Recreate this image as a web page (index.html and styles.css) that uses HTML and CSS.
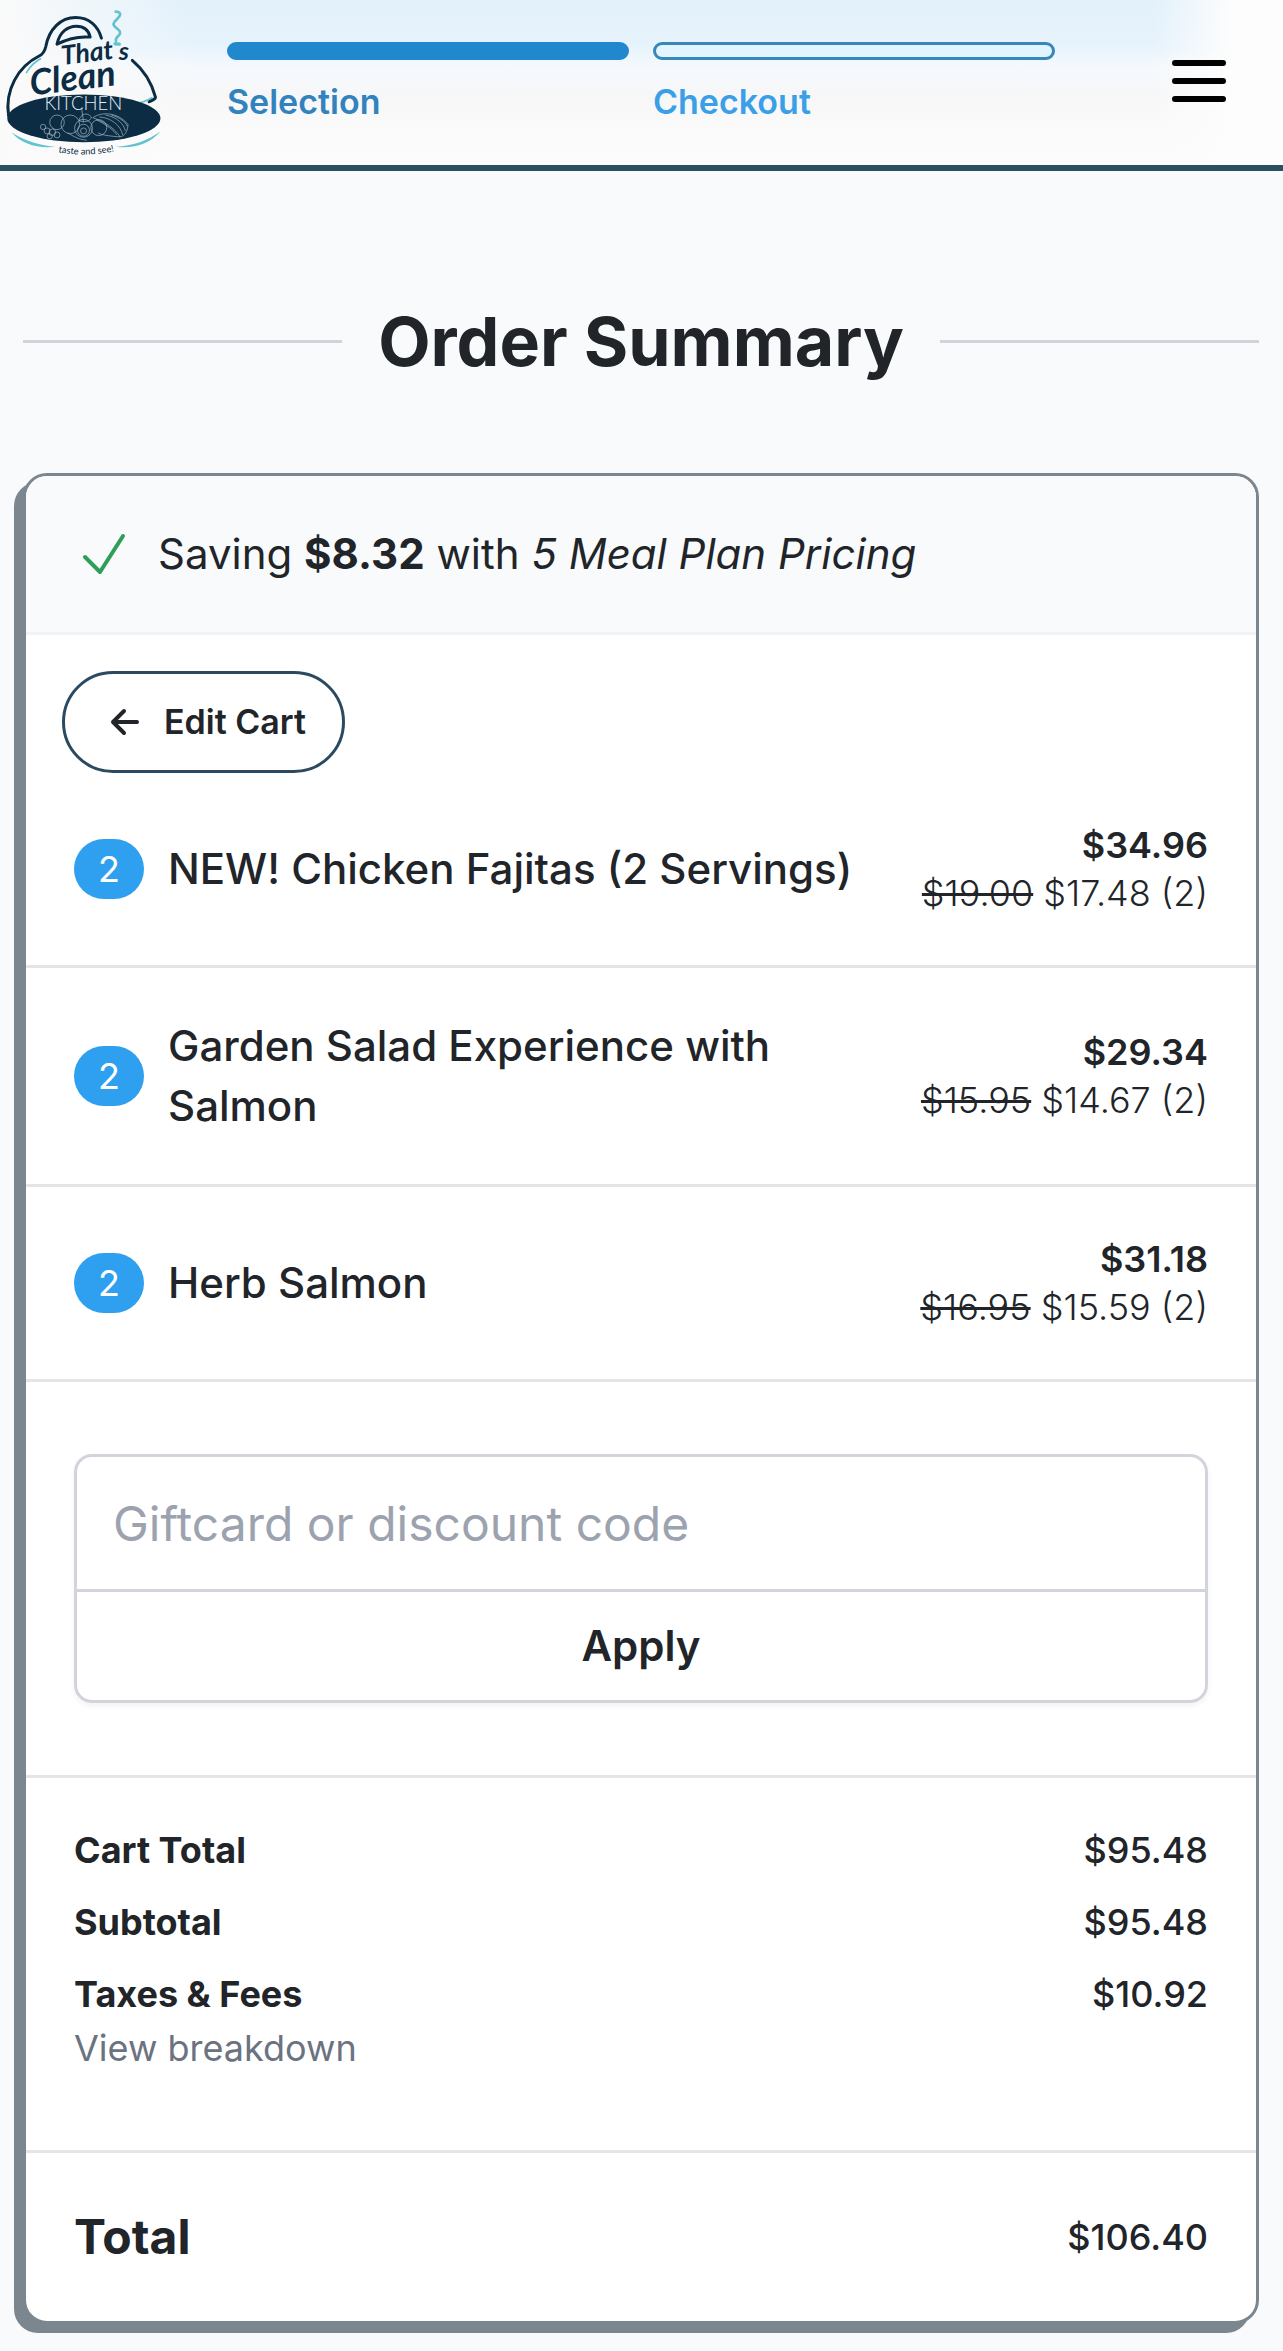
FILE: index.html
```html
<!DOCTYPE html>
<html lang="en">
<head>
  <meta charset="UTF-8" />
  <meta name="viewport" content="width=device-width, initial-scale=1.0" />
  <title>Order Summary</title>
  <link rel="stylesheet" href="styles.css">
</head>
<body>
  <header class="site-header">
    <a class="logo" href="#" aria-label="That's Clean Kitchen">
      <svg viewBox="0 0 540 480" aria-hidden="true">
        <!-- dish cover -->
        <g fill="none" stroke="#0c2c44" stroke-width="9" stroke-linecap="round" stroke-linejoin="round">
          <path d="M26 346C14 270 54 198 118 166C130 160 135 152 138 138C148 84 184 50 228 50C270 50 296 76 306 112"/>
          <path d="M172 130C180 92 206 76 230 76C254 76 268 90 272 109C240 106 204 114 172 130Z"/>
          <path d="M399 179C436 210 458 248 469 290C470 296 460 299 450 304"/>
        </g>
        <g fill="none" stroke="#62c3cf" stroke-linecap="round">
          <path d="M80 216C90 198 104 184 122 174" stroke-width="5"/>
          <path d="M402 311C424 308 442 302 458 292" stroke-width="5"/>
          <path d="M349 32C376 34 356 52 346 62C332 80 366 82 362 98C358 108 346 110 350 121" stroke-width="8"/>
          <path d="M347 129L360 130" stroke-width="10"/>
        </g>
        <!-- plate -->
        <ellipse cx="253" cy="354" rx="231" ry="72" fill="#0c2c44"/>
        <path d="M34 396C78 424 122 436 168 440C114 446 66 432 34 396Z" fill="#62c3cf"/>
        <path d="M484 393C444 424 398 436 350 440C404 447 454 430 484 393Z" fill="#62c3cf"/>
        <!-- food sketch -->
        <g fill="none" stroke="#a9bcc8" stroke-width="2">
          <circle cx="172" cy="366" r="22"/><circle cx="212" cy="372" r="28"/><circle cx="252" cy="384" r="27"/><circle cx="298" cy="382" r="24"/>
          <circle cx="252" cy="390" r="18"/><circle cx="252" cy="392" r="9"/>
          <circle cx="130" cy="380" r="8"/><circle cx="142" cy="392" r="9"/><circle cx="158" cy="396" r="10"/><circle cx="150" cy="408" r="8"/><circle cx="172" cy="404" r="9"/>
          <path d="M238 360C244 340 262 334 276 350C272 364 252 368 238 360ZM252 366L246 322"/>
          <path d="M280 352C306 334 354 334 386 372C386 392 376 408 362 410C348 384 310 362 280 352Z"/>
          <path d="M300 350C336 352 364 376 370 404M318 344C352 350 374 370 378 392M336 344C362 352 378 364 384 378M290 358C320 372 346 392 352 404M204 398C228 412 240 418 262 420M296 398C310 406 340 408 362 410"/>
        </g>
        <g class="logo-script" transform="rotate(-7 200 230)">
          <text x="192" y="192" font-size="80">That</text>
          <text x="88" y="272" font-size="108">Clean</text>
        </g>
        <text class="logo-script" x="358" y="177" font-size="76">s</text>
        <text class="logo-kitchen" x="134" y="330">KITCHEN</text>
        <path id="tagline" d="M176 456Q262 472 350 452" fill="none"/>
        <text class="logo-tagline"><textPath href="#tagline">taste and see!</textPath></text>
      </svg>
    </a>
    <nav class="steps" aria-label="Progress">
      <a class="step step-done" href="#"><span class="step-bar"></span>Selection</a>
      <a class="step" href="#"><span class="step-bar"></span>Checkout</a>
    </nav>
    <button type="button" class="menu-btn" aria-label="Menu">
      <svg viewBox="0 0 54 42" aria-hidden="true"><path d="M3 3H51M3 21H51M3 39H51" stroke="#000" stroke-width="6" stroke-linecap="round"/></svg>
    </button>
  </header>

  <main class="page">
    <h1 class="page-title">Order Summary</h1>

    <section class="card">
      <div class="saving">
        <svg class="check" viewBox="0 0 44 42" fill="none" aria-hidden="true"><path d="M3 24L18 39L41 3" stroke="#2f9e58" stroke-width="4" stroke-linecap="round" stroke-linejoin="round"/></svg>
        <p>Saving <strong>$8.32</strong> with <em>5 Meal Plan Pricing</em></p>
      </div>

      <button type="button" class="edit-btn">
        <svg viewBox="0 0 30 30" fill="none" aria-hidden="true"><path d="M14 4L3 15L14 26M3 15H27" stroke="currentColor" stroke-width="4" stroke-linecap="round" stroke-linejoin="round"/></svg>
        Edit Cart
      </button>

      <ul class="items">
        <li class="item">
          <span class="qty">2</span>
          <span class="name">NEW! Chicken Fajitas (2 Servings)</span>
          <span class="price"><b>$34.96</b><span><s>$19.00</s> $17.48 (2)</span></span>
        </li>
        <li class="item">
          <span class="qty">2</span>
          <span class="name">Garden Salad Experience with Salmon</span>
          <span class="price"><b>$29.34</b><span><s>$15.95</s> $14.67 (2)</span></span>
        </li>
        <li class="item">
          <span class="qty">2</span>
          <span class="name">Herb Salmon</span>
          <span class="price"><b>$31.18</b><span><s>$16.95</s> $15.59 (2)</span></span>
        </li>
      </ul>

      <form class="coupon">
        <div class="coupon-box">
          <input type="text" id="code" name="code" class="coupon-input" placeholder="Giftcard or discount code" aria-label="Giftcard or discount code" />
          <button type="button" class="coupon-btn">Apply</button>
        </div>
      </form>

      <dl class="totals">
        <div class="row"><dt>Cart Total</dt><dd>$95.48</dd></div>
        <div class="row"><dt>Subtotal</dt><dd>$95.48</dd></div>
        <div class="row">
          <dt>Taxes &amp; Fees <button type="button" class="breakdown">View breakdown</button></dt>
          <dd>$10.92</dd>
        </div>
      </dl>

      <dl class="grand">
        <div class="row"><dt>Total</dt><dd>$106.40</dd></div>
      </dl>
    </section>
  </main>
</body>
</html>
```
FILE: styles.css
```css
*{box-sizing:border-box}
body{margin:0;background:#f8fafc;color:#212529;font-family:Inter,"Liberation Sans",sans-serif;font-size:36px;line-height:48px}
button,input{font:inherit;color:inherit}
button{background:none;border:none;padding:0;cursor:pointer}
p,ul,dl,dd{margin:0;padding:0}

/* header */
.site-header{display:flex;align-items:center;gap:48px;height:171px;padding:0 57px 3px 0;border-bottom:6px solid #2a5160;
  background:linear-gradient(90deg,#fafafa 0,#fafafa00 15%,#fdfdfd00 90%,#fdfdfd 96%),linear-gradient(180deg,#e2f1fb 0,#e7f3fc 45px,#f5f9fd 68px,#f7f7f8 95px,#fdfdfd 165px)}
.logo{flex:none;width:179px}
.logo svg{display:block;width:100%}
.logo-script{font-family:Lato,sans-serif;font-weight:700;font-style:italic;fill:#0c2c44}
.logo-kitchen{font-family:Lato,sans-serif;font-weight:300;font-size:56px;fill:#e4edf2}
.logo-tagline{font-family:Lato,sans-serif;font-size:28px;fill:#0c2c44}
.steps{flex:1;display:flex;gap:24px;margin-right:69px;padding-top:6px}
.step{flex:1;color:#3b9fe8;font-size:34px;font-weight:600;text-decoration:none}
.step-bar{display:block;height:18px;margin-bottom:18px;border:3px solid #3887b8;border-radius:9px;background:#e2f4fe}
.step-done{color:#3182bd}
.step-done .step-bar{background:#2288cd;border-color:#2288cd}
.menu-btn{flex:none;width:54px}
.menu-btn svg{display:block;width:100%}

/* page */
.page{padding:134px 24px 54px 23px}
.page-title{display:flex;align-items:center;gap:36px;margin:0 0 96px;font-size:68px;line-height:72px;font-weight:700}
.page-title::before,.page-title::after{content:"";flex:1;height:3px;background:#d1d5db}
.card{border:3px solid #7b868e;border-radius:24px;background:#fff;box-shadow:-9px 9px 0 #7b868e}

.saving{display:flex;align-items:center;gap:32px;padding:48px 56px;border-bottom:3px solid #f1f2f4;border-radius:21px 21px 0 0;background:#f8fafc;font-size:42px;line-height:60px}
.check{flex:none;width:44px}
.edit-btn{display:flex;align-items:center;gap:24px;height:102px;margin:36px 36px 0;padding:0 36px 0 45px;border:3px solid #2b4a60;border-radius:51px;font-size:34px;font-weight:600}
.edit-btn svg{width:30px}

.items{list-style:none}
.item{display:flex;align-items:center;gap:24px;padding:48px;border-bottom:3px solid #e5e5e5}
.qty{flex:none;width:70px;height:60px;border-radius:30px;background:#2f9ff0;color:#fff;line-height:60px;text-align:center}
.name{flex:1;font-size:42px;line-height:60px;font-weight:500}
.price{flex:none;display:flex;flex-direction:column;text-align:right;font-weight:300}
.price b{font-weight:600}

.coupon{padding:72px 48px;border-bottom:3px solid #e5e5e5}
.coupon-box{border:3px solid #d1d5db;border-radius:18px;box-shadow:0 3px 6px rgba(0,0,0,.05)}
.coupon-input{display:block;width:100%;height:132px;padding:0 36px;border:none;background:none;font-size:48px;outline:none}
.coupon-input::placeholder{color:#9ca3af;opacity:1}
.coupon-btn{display:block;width:100%;height:111px;border-top:3px solid #d1d5db;font-size:42px;font-weight:600}

.row{display:flex;justify-content:space-between}
.row dd{font-weight:500}
.row dt{font-weight:700}
.totals{display:flex;flex-direction:column;gap:24px;padding:48px 48px 78px;border-bottom:3px solid #e5e5e5}
.breakdown{display:block;margin-top:6px;color:#6b7280;font-weight:400}
.grand{padding:48px}
.grand .row{align-items:center}
.grand dt{font-size:48px;line-height:72px}
```
